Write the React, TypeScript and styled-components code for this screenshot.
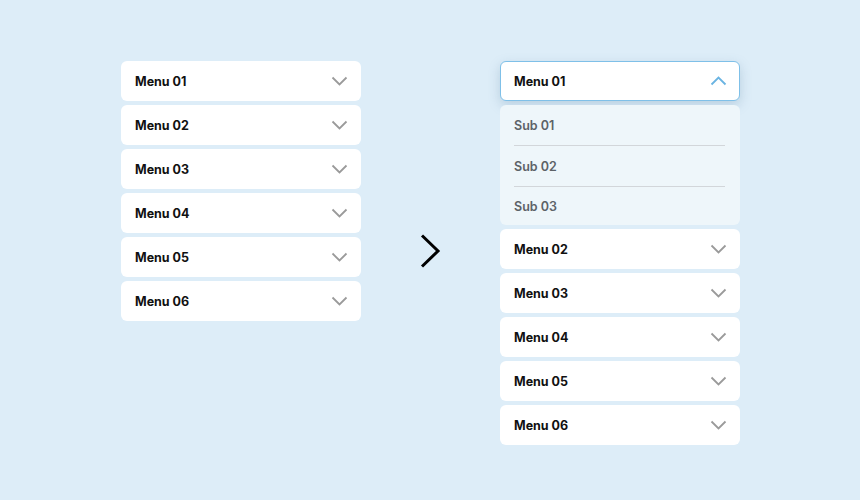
import styled, { createGlobalStyle } from 'styled-components'

const GlobalStyle = createGlobalStyle`
  html, body {
    margin: 0;
    padding: 0;
    background: #ddedf8;
  }
  body {
    font-family: Inter, 'Liberation Sans', sans-serif;
  }
`

const Page = styled.div`
  width: 860px;
  height: 500px;
  display: flex;
  align-items: flex-start;
  padding: 61px 0 0 121px;
  box-sizing: border-box;
`

const Column = styled.div`
  width: 240px;
  display: flex;
  flex-direction: column;
  gap: 4px;
`

const Middle = styled.div`
  width: 139px;
  display: flex;
  justify-content: center;
  padding-top: 173px;
`

const Row = styled.div<{ $open?: boolean }>`
  height: 40px;
  box-sizing: border-box;
  background: #fff;
  border-radius: 6px;
  display: flex;
  align-items: center;
  justify-content: space-between;
  padding: 0 12px 0 13px;
  border: 1px solid ${p => (p.$open ? '#7fc0e8' : 'transparent')};
  box-shadow: ${p => (p.$open ? '0 4px 12px rgba(90, 130, 160, 0.28)' : 'none')};
  font-size: 12.5px;
  font-weight: 700;
  color: #111;
`

const SubPanel = styled.div`
  background: #eef6fa;
  border-radius: 6px;
  padding: 0 15px 0 14px;
  display: flex;
  flex-direction: column;
`

const SubItem = styled.div<{ $last?: boolean }>`
  height: ${p => (p.$last ? '38px' : '40px')};
  display: flex;
  align-items: center;
  font-size: 12.5px;
  font-weight: 600;
  color: #5c6267;
  border-bottom: ${p => (p.$last ? 'none' : '1px solid #d2d6da')};
`

const Chevron = ({ up, color }: { up?: boolean; color: string }) => (
  <svg width="17" height="10" viewBox="0 0 17 10">
    <polyline
      points={up ? '1.5,8.5 8.5,1.5 15.5,8.5' : '1.5,1.5 8.5,8.5 15.5,1.5'}
      fill="none"
      stroke={color}
      strokeWidth="1.8"
    />
  </svg>
)

const menus = ['Menu 01', 'Menu 02', 'Menu 03', 'Menu 04', 'Menu 05', 'Menu 06']
const subs = ['Sub 01', 'Sub 02', 'Sub 03']

export default function App() {
  return (
    <>
      <GlobalStyle />
      <Page>
        <Column>
          {menus.map(m => (
            <Row key={m}>
              {m}
              <Chevron color="#9a9a9a" />
            </Row>
          ))}
        </Column>
        <Middle>
          <svg width="22" height="34" viewBox="0 0 22 34">
            <polyline points="2,1.5 18,17 2,32.5" fill="none" stroke="#000" strokeWidth="3" />
          </svg>
        </Middle>
        <Column>
          <Row $open>
            Menu 01
            <Chevron up color="#6ab4e2" />
          </Row>
          <SubPanel>
            {subs.map((s, i) => (
              <SubItem key={s} $last={i === subs.length - 1}>
                {s}
              </SubItem>
            ))}
          </SubPanel>
          {menus.slice(1).map(m => (
            <Row key={m}>
              {m}
              <Chevron color="#9a9a9a" />
            </Row>
          ))}
        </Column>
      </Page>
    </>
  )
}
